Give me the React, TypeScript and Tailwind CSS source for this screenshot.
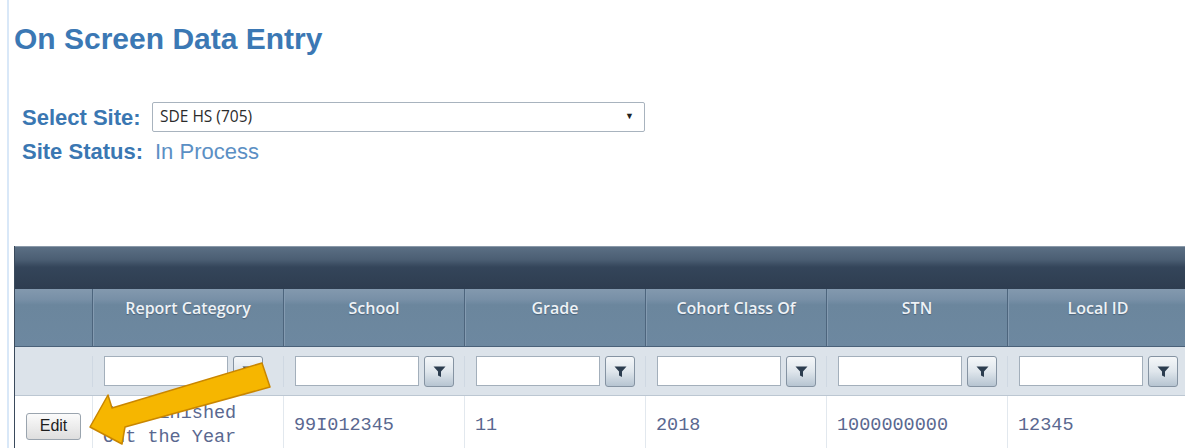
import type { ReactNode } from "react"

const columns = ["Report Category", "School", "Grade", "Cohort Class Of", "STN", "Local ID"]

const record = ["Not Finished Out the Year", "99I012345", "11", "2018", "1000000000", "12345"]

const FunnelIcon = () => (
    <svg width="13" height="13" viewBox="0 0 13 13" fill="#2c3d4f">
        <path d="M0.5 1.5h12L8 6.5v5.5L5 10.5V6.5z" />
    </svg>
)

const FilterCell = () => (
    <div className="flex items-center gap-[5px] pl-[11px] border-l border-[#cfd8e2]">
        <div className="w-[124px] h-[30px] bg-white border border-[#a3afbb]" />
        <button className="w-[30px] h-[31px] flex items-center justify-center rounded-[3px] border border-[#8593a2] bg-[linear-gradient(#f5f7f9_0%,#dfe6ec_50%,#b6c4d1_100%)]">
            <FunnelIcon />
        </button>
    </div>
)

const HeaderCell = ({ children }: { children?: ReactNode }) => (
    <div className="border-l border-[#4d657d] shadow-[inset_1px_0_0_#849bb1] pt-[7px] text-center text-[16px] font-semibold text-[#eef2f6] [text-shadow:0_1px_1px_#4a6177] font-['Open_Sans',sans-serif]">
        {children}
    </div>
)

const SiteArrow = () => (
    <svg className="absolute left-0 top-0 pointer-events-none" width="300" height="448" viewBox="0 0 300 448">
        <polygon
            points="90,427 108,395 112,408 262,363 270,387 125,427 122,444"
            fill="#f6b600"
            stroke="#c98600"
            strokeWidth="1.5"
            strokeLinejoin="round"
        />
    </svg>
)

const App = () => {
    return (
        <div className="relative w-[1185px] h-[448px] overflow-hidden bg-white font-['Liberation_Sans',Arial,sans-serif]">
            <div className="ml-[7px] h-full border-l-2 border-[#d9e8f8] pl-[5px] pt-[21px]">
                <h1 className="text-[30px] leading-[35px] font-bold text-[#3b78b4]">On Screen Data Entry</h1>

                <div className="mt-[46px] pl-[8px] flex flex-col gap-[4px]">
                    <div className="flex items-center h-[30px] gap-[8px]">
                        <span className="w-[122px] text-[22px] font-bold text-[#3a77b2]">Select Site:</span>
                        <div className="w-[493px] h-[30px] flex items-center justify-between pl-[7px] pr-[10px] border border-[#a8b3be] rounded-[2px] bg-white">
                            <span className="text-[15.5px] text-[#2b2b2b] font-['Open_Sans',sans-serif]">SDE HS (705)</span>
                            <span className="text-[9px] text-[#222]">▼</span>
                        </div>
                    </div>
                    <div className="flex items-center h-[30px] gap-[11px]">
                        <span className="w-[122px] text-[22px] font-bold text-[#3a77b2]">Site Status:</span>
                        <span className="text-[22px] text-[#5b8fc4]">In Process</span>
                    </div>
                </div>

                <div className="mt-[80px] w-[1174px] border-l border-[#3a4a5c]">
                    <div className="h-[43px] border-t border-[#8a99a9] bg-[linear-gradient(#5b6f84_0%,#4b5e73_30%,#34455a_48%,#2e3d50_100%)]" />

                    <div className="grid grid-cols-[77px_191px_181px_181px_181px_181px_181px] h-[58px] bg-[linear-gradient(#8399ae_0%,#7890a7_18%,#6b869d_28%,#6d88a0_100%)] border-b border-[#4a6179]">
                        <div />
                        {columns.map((title) => (
                            <HeaderCell key={title}>{title}</HeaderCell>
                        ))}
                    </div>

                    <div className="grid grid-cols-[77px_191px_181px_181px_181px_181px_181px] h-[49px] items-center bg-[#dce3ea] border-b border-[#bcc7d2]">
                        <div />
                        {columns.map((title) => (
                            <FilterCell key={title} />
                        ))}
                    </div>

                    <div className="grid grid-cols-[77px_191px_181px_181px_181px_181px_181px] bg-white">
                        <div className="flex items-center justify-center pt-[2px]">
                            <button className="w-[55px] h-[27px] rounded-[3px] border border-[#9aa4ae] bg-[linear-gradient(#fbfbfb,#dedede)] text-[16px] text-[#1e1e1e] leading-none">
                                Edit
                            </button>
                        </div>
                        {record.map((value, i) => (
                            <div
                                key={i}
                                className="border-l border-[#e2e8ee] pl-[10px] pr-[12px] pt-[6px] pb-[4px] flex items-center text-[18.5px] leading-[24px] text-[#5a6890] font-['Liberation_Mono','Courier_New',monospace]"
                            >
                                {value}
                            </div>
                        ))}
                    </div>
                </div>
            </div>

            <SiteArrow />
        </div>
    )
}

export default App
